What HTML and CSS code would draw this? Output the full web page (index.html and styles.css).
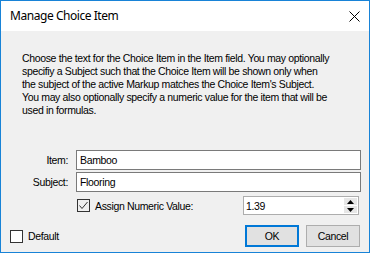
FILE: index.html
```html
<!DOCTYPE html>
<html lang="en">
<head>
    <meta charset="UTF-8">
    <meta name="viewport" content="width=device-width, initial-scale=1.0">
    <title>Manage Choice Item</title>
    <link rel="stylesheet" href="styles.css">
</head>
<body>
    <div class="window">
        <div class="titlebar">
            <span class="title">Manage Choice Item</span>
            <span class="close">
                <svg width="11" height="11" viewBox="0 0 11 11"><path d="M0.5 0.5 L10.5 10.5 M10.5 0.5 L0.5 10.5" stroke="#000" stroke-width="1"/></svg>
            </span>
        </div>

        <div class="content">
            <p class="desc">
                <span class="line">Choose the text for the Choice Item in the Item field. You may optionally</span>
                <span class="line">specifiy a Subject such that the Choice Item will be shown only when</span>
                <span class="line">the subject of the active Markup matches the Choice Item's Subject.</span>
                <span class="line">You may also optionally specify a numeric value for the item that will be</span>
                <span class="line">used in formulas.</span>
            </p>

            <div class="form">
                <label class="field-label" for="itemInput">Item:</label>
                <input type="text" class="text-input" id="itemInput" value="Bamboo">

                <label class="field-label" for="subjectInput">Subject:</label>
                <input type="text" class="text-input" id="subjectInput" value="Flooring">

                <span></span>
                <div class="numeric-row">
                    <label class="check">
                        <span class="box">
                            <svg width="11" height="11" viewBox="0 0 11 11"><path d="M1.5 5.5 L4 8.5 L9.5 2" fill="none" stroke="#333" stroke-width="1"/></svg>
                        </span>
                        Assign Numeric Value:
                    </label>
                    <div class="spin">
                        <input type="text" class="spin-input" value="1.39">
                        <div class="spin-buttons">
                            <span class="spin-btn"><svg width="7" height="4" viewBox="0 0 7 4"><path d="M3.5 0 L7 4 L0 4 Z" fill="#000"/></svg></span>
                            <span class="spin-btn"><svg width="7" height="4" viewBox="0 0 7 4"><path d="M0 0 L7 0 L3.5 4 Z" fill="#000"/></svg></span>
                        </div>
                    </div>
                </div>
            </div>

            <div class="footer">
                <label class="check">
                    <span class="box"></span>
                    Default
                </label>
                <div class="buttons">
                    <button class="btn btn-default">OK</button>
                    <button class="btn">Cancel</button>
                </div>
            </div>
        </div>
    </div>
</body>
</html>
```

FILE: styles.css
```css
body {
    margin: 0;
    font-family: "Liberation Sans", Arial, sans-serif;
    font-size: 10.5px;
    letter-spacing: -0.35px;
    color: #000;
    background-color: #fff;
}
.window {
    width: 368px;
    height: 251px;
    border: 1px solid #1883d7;
    background-color: #f0f0f0;
    display: flex;
    flex-direction: column;
}
.titlebar {
    height: 30px;
    background-color: #fff;
    display: flex;
    align-items: center;
    justify-content: space-between;
    padding: 0 9px 0 9px;
}
.title {
    font-family: "Noto Sans", sans-serif;
    font-size: 12px;
    letter-spacing: -0.45px;
    color: #000;
    margin-top: -1px;
}
.close {
    display: flex;
    width: 11px;
    height: 11px;
}
.content {
    flex: 1;
    display: flex;
    flex-direction: column;
}
.desc {
    margin: 21px 0 0 21px;
    line-height: 13px;
}
.line {
    display: block;
    white-space: nowrap;
}
.form {
    display: grid;
    grid-template-columns: 67px 285px;
    column-gap: 8px;
    row-gap: 2px;
    margin-top: 33px;
}
.field-label {
    text-align: right;
    line-height: 20px;
}
.text-input {
    height: 20px;
    box-sizing: border-box;
    border: 1px solid #7a7a7a;
    background-color: #fff;
    padding: 0 3px;
    margin: 0;
    font-family: inherit;
    font-size: 10.5px;
    letter-spacing: -0.35px;
    outline: none;
}
.numeric-row {
    display: flex;
    align-items: center;
    justify-content: space-between;
    margin-top: 2px;
    padding-left: 1px;
    padding-right: 2px;
}
.check {
    display: flex;
    align-items: center;
    gap: 5px;
}
.box {
    width: 11px;
    height: 11px;
    border: 1px solid #333;
    background-color: #fff;
    display: flex;
}
.numeric-row .box {
    background-color: #f0f0f0;
}
.spin {
    display: flex;
    width: 116px;
    height: 19px;
    box-sizing: border-box;
    border: 1px solid #adadad;
    background-color: #fff;
}
.spin-input {
    flex: 1;
    min-width: 0;
    border: none;
    padding: 0 2px;
    margin: 0;
    font-family: inherit;
    font-size: 10.5px;
    letter-spacing: -0.35px;
    outline: none;
    background: transparent;
}
.spin-buttons {
    width: 13px;
    display: flex;
    flex-direction: column;
    gap: 1px;
    margin: 1px 1px 1px 0;
}
.spin-btn {
    flex: 1;
    background-color: #e6e6e6;
    display: flex;
    align-items: center;
    justify-content: center;
}
.footer {
    display: flex;
    align-items: center;
    justify-content: space-between;
    margin-top: 10px;
    padding: 0 9px 0 9px;
}
.buttons {
    display: flex;
    gap: 7px;
}
.btn {
    width: 54px;
    height: 22px;
    box-sizing: border-box;
    border: 1px solid #adadad;
    background-color: #e1e1e1;
    font-family: inherit;
    font-size: 10.5px;
    letter-spacing: -0.35px;
    color: #000;
    padding: 0;
}
.btn-default {
    border: 2px solid #0078d7;
}
```
